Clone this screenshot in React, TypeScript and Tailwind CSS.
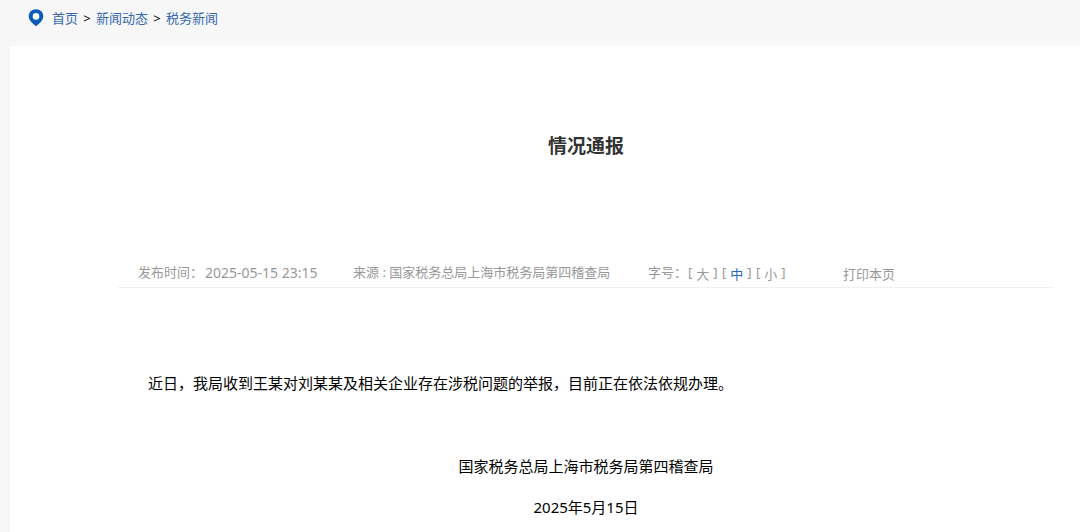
import { useState } from "react";

const crumbs = ["首页", "新闻动态", "税务新闻"];
const sizes = ["大", "中", "小"];

function PinIcon() {
  return (
    <svg viewBox="0 0 16 18" className="h-[18px] w-4" aria-hidden="true">
      <path
        fill="#0a5cb8"
        fillRule="evenodd"
        d="M8 .3C3.7.3.7 3.4.7 7.3c0 2.9 1.7 5 3.8 6.9L8 17.3l3.5-3.1c2.1-1.9 3.8-4 3.8-6.9C15.3 3.4 12.3.3 8 .3Zm0 3.8a3.3 3.3 0 1 1 0 6.6 3.3 3.3 0 0 1 0-6.6Z"
      />
    </svg>
  );
}

export default function App() {
  const [size, setSize] = useState("中");

  return (
    <div className="flex min-h-screen flex-col bg-[#f7f7f7] font-['Noto_Sans','Noto_Sans_CJK_SC',sans-serif] text-black">
      <nav aria-label="当前位置" className="flex h-[46px] items-start pt-2 pl-7">
        <span className="pt-px">
          <PinIcon />
        </span>
        <ol className="flex pl-2 text-[13px] leading-5">
          {crumbs.map((name, i) => (
            <li key={name} className="flex">
              {i > 0 && <span className="w-[18px] text-center">&gt;</span>}
              <a href="#" className="text-[#3568b0]">
                {name}
              </a>
            </li>
          ))}
        </ol>
      </nav>

      <main className="ml-[10px] grow bg-white pr-[26px] pl-[108px]">
        <h1 className="pt-[86px] text-center text-[19px] leading-7 font-bold text-[#333]">
          情况通报
        </h1>

        <div className="mt-[102px] flex border-b border-[#f0f0f0] pb-[3px] pl-5 text-[13px] leading-5 whitespace-nowrap text-[#999]">
          <p className="flex w-[215px] gap-0.5">
            <span>发布时间：</span>
            <time dateTime="2025-05-15T23:15" className="pt-px text-sm">
              2025-05-15 23:15
            </time>
          </p>
          <p className="w-[295px]">来源 : 国家税务总局上海市税务局第四稽查局</p>
          <div className="flex w-[195px]">
            <span className="w-10">字号：</span>
            {sizes.map((s) => (
              <span key={s} className="flex w-[34px] gap-1">
                <span>[</span>
                <button
                  type="button"
                  aria-pressed={s === size}
                  onClick={() => setSize(s)}
                  className={s === size ? "pt-0.5 text-[#2468c0]" : "pt-0.5"}
                >
                  {s}
                </button>
                <span>]</span>
              </span>
            ))}
          </div>
          <button type="button" onClick={() => window.print()} className="pt-0.5">
            打印本页
          </button>
        </div>

        <article className="text-[15px] leading-6">
          <p className="pt-[83px] pl-[30px]">
            近日，我局收到王某对刘某某及相关企业存在涉税问题的举报，目前正在依法依规办理。
          </p>
          <p className="pt-[59px] text-center">国家税务总局上海市税务局第四稽查局</p>
          <p className="pt-[17px] text-center">2025年5月15日</p>
        </article>
      </main>
    </div>
  );
}
